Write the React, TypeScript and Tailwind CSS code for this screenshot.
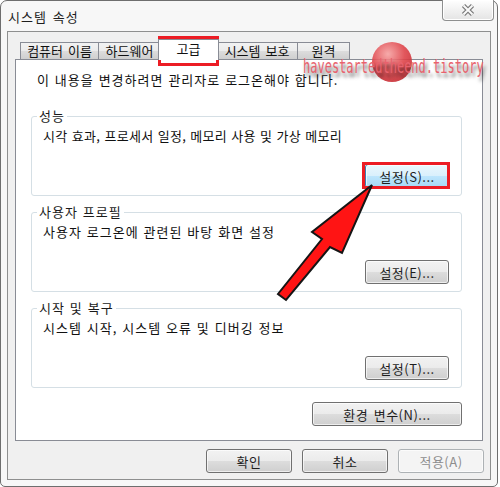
import type { ReactNode } from "react";

const ko = "font-['Noto_Sans_CJK_KR','Noto_Sans',sans-serif]";
const base = "text-[13px] leading-[16px] [word-spacing:1px]";
const txt = `${base} tracking-[1px]`;
const tabTxt = "text-[13px] leading-[16px] [word-spacing:2px]";

function Button({
  children,
  className = "",
  variant = "normal",
}: {
  children: ReactNode;
  className?: string;
  variant?: "normal" | "focus" | "disabled";
}) {
  const look =
    variant === "focus"
      ? "border-[#3c7fb1] bg-[linear-gradient(#eaf6fd_0%,#d9f0fc_50%,#bee6fd_50%,#a7d9f5_100%)] text-[#1e1e1e]"
      : variant === "disabled"
        ? "border-[#adb2b5] bg-[#f4f4f4] text-[#8d8d8d]"
        : "border-[#707070] bg-[linear-gradient(#f2f2f2_0%,#ebebeb_50%,#dddddd_50%,#cfcfcf_100%)] text-[#1e1e1e]";
  return (
    <button
      className={`h-[24px] rounded-[3px] border text-[13px] leading-none tracking-[0.5px] [word-spacing:2px] shadow-[inset_0_0_0_1px_rgba(255,255,255,0.65)] ${look} ${className}`}
    >
      {children}
    </button>
  );
}

function Group({
  title,
  desc,
  btn,
  variant,
  tight = false,
}: {
  title: string;
  desc: string;
  btn: string;
  variant?: "normal" | "focus";
  tight?: boolean;
}) {
  return (
    <fieldset className="rounded-[3px] border border-[#d5dfe5] px-[5px] pb-[7px]">
      <legend className={`px-[2px] text-[#1a1a1a] ${txt}`}>{title}</legend>
      <p className={`mt-[4px] pl-[6px] ${base} ${tight ? "tracking-[0.3px]" : "tracking-[1px]"}`}>{desc}</p>
      <div className="mt-[20px] flex justify-end pr-[7px]">
        <Button className="w-[84px]" variant={variant}>
          {btn}
        </Button>
      </div>
    </fieldset>
  );
}

const tabs = [
  { label: "컴퓨터 이름", cls: "w-[79px]" },
  { label: "하드웨어", cls: "-ml-px w-[63px]" },
  { label: "고급", cls: "-ml-[3px] w-[61px]", active: true },
  { label: "시스템 보호", cls: "-ml-[3px] w-[82px]" },
  { label: "원격", cls: "-ml-px w-[53px]" },
];

export default function App() {
  return (
    <div className={`relative h-[487px] w-[500px] overflow-hidden bg-white text-[#111] ${ko}`}>
      {/* window */}
      <div className="flex h-[487px] w-[498px] flex-col rounded-t-[7px] rounded-b-[5px] border border-[#6e6e6e] bg-[#f7f7f7]">
        {/* title bar */}
        <div className="flex h-[30px] items-start justify-between">
          <span className="pl-[7px] pt-[7px] text-[13px] leading-[18px] tracking-[1px] text-[#1e1e1e] [word-spacing:2px]">
            시스템 속성
          </span>
          <button className="-mt-px mr-[3px] flex h-[21px] w-[52px] items-center justify-center rounded-b-[4px] border border-t-0 border-[#8e8f8f] bg-linear-to-b from-white to-[#e4e4e4] shadow-[inset_0_0_0_1px_#ffffff]">
            <svg width="16" height="14" viewBox="0 0 16 14">
              <path d="M3.5 2.5 L12.5 11.5 M12.5 2.5 L3.5 11.5" stroke="#7b7b7b" strokeWidth="4.5" />
              <path d="M3.5 2.5 L12.5 11.5 M12.5 2.5 L3.5 11.5" stroke="#fafafa" strokeWidth="2" />
            </svg>
          </button>
        </div>

        {/* client area */}
        <div className="mx-[6px] mb-[6px] flex flex-1 flex-col border border-[#8e8f8f] bg-[#f0f0f0]">
          {/* tabs */}
          <div className="flex h-[27px] items-end pl-[12px]">
            {tabs.map((t) =>
              t.active ? (
                <div
                  key={t.label}
                  className={`relative z-10 -mb-px flex h-[21px] items-start justify-center border border-b-0 border-[#898c95] bg-white pt-[1px] ${tabTxt} ${t.cls}`}
                >
                  {t.label}
                </div>
              ) : (
                <div
                  key={t.label}
                  className={`flex h-[17px] items-center justify-center border border-b-0 border-[#898c95] bg-[linear-gradient(#f2f2f2_0%,#ebebeb_50%,#dddddd_50%,#cfcfcf_100%)] ${tabTxt} ${t.cls}`}
                >
                  {t.label}
                </div>
              ),
            )}
          </div>

          {/* panel */}
          <div className="mx-[7px] flex flex-col border border-[#898c95] bg-white pb-[14px] pl-[15px] pr-[20px] pt-[12px]">
            <p className={`pl-[6px] ${txt}`}>이 내용을 변경하려면 관리자로 로그온해야 합니다.</p>
            <div className="mt-[20px] flex flex-col gap-[8px]">
              <Group
                title="성능"
                desc="시각 효과, 프로세서 일정, 메모리 사용 및 가상 메모리"
                btn="설정(S)..."
                variant="focus"
                tight
              />
              <Group title="사용자 프로필" desc="사용자 로그온에 관련된 바탕 화면 설정" btn="설정(E)..." />
              <Group title="시작 및 복구" desc="시스템 시작, 시스템 오류 및 디버깅 정보" btn="설정(T)..." />
            </div>
            <div className="mt-[14px] flex justify-end">
              <Button className="w-[150px]">환경 변수(N)...</Button>
            </div>
          </div>

          {/* dialog buttons */}
          <div className="mt-[8px] flex justify-end gap-[10px] pr-[6px]">
            <Button className="w-[86px]">확인</Button>
            <Button className="w-[86px]">취소</Button>
            <Button className="w-[86px]" variant="disabled">
              적용(A)
            </Button>
          </div>
        </div>
      </div>

      {/* annotations laid over the screenshot */}
      <div className="pointer-events-none absolute left-[158px] top-[36px] h-[30px] w-[61px] border-[3px] border-[#ec1c24]" />
      <div className="pointer-events-none absolute left-[362px] top-[162px] h-[27px] w-[88px] border-[3px] border-[#ec1c24]" />

      <div className="pointer-events-none absolute left-[372px] top-[42px] h-[40px] w-[40px] rounded-full bg-[radial-gradient(circle_at_40%_30%,#f7a3a3_0%,#e0464c_45%,#b81d24_100%)] opacity-90" />
      <div className="pointer-events-none absolute left-[303px] top-[56px] origin-top-left scale-y-[1.65] font-['DejaVu_Sans_Mono',monospace] text-[12px] leading-[12px] text-[#e8626d] [text-shadow:2px_3px_3px_rgba(0,0,0,0.6)]">
        havestartedtheend.tistory
      </div>

      <svg className="pointer-events-none absolute left-0 top-0" width="500" height="487">
        <polygon
          points="372,185 312,232 322,239 278,294 286,300 330,247 342,253"
          fill="#ff1414"
          stroke="#151515"
          strokeWidth="2"
          strokeLinejoin="miter"
        />
      </svg>
    </div>
  );
}
